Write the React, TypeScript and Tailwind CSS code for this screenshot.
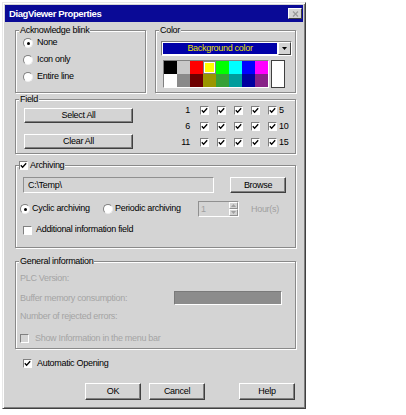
import type { ReactNode } from "react";

const FACE = "bg-[#d4d4d4]";

function Check({ checked = true, disabled = false }: { checked?: boolean; disabled?: boolean }) {
  return (
    <span
      className={`inline-flex w-[9px] h-[9px] shrink-0 items-center justify-center border border-t-[#808080] border-l-[#808080] border-r-white border-b-white ${
        disabled ? "bg-[#d4d4d4]" : "bg-white"
      }`}
    >
      {checked && (
        <svg width="7" height="7" viewBox="0 0 7 7">
          <path d="M0.8 3.2 L2.6 5.2 L6.2 1.2" fill="none" stroke="#000" strokeWidth="1.3" />
        </svg>
      )}
    </span>
  );
}

function Radio({ on = false }: { on?: boolean }) {
  return (
    <span className="inline-flex w-[10px] h-[10px] shrink-0 items-center justify-center rounded-full bg-white border border-t-[#808080] border-l-[#808080] border-r-[#eeeeee] border-b-[#eeeeee]">
      {on && <span className="w-[3px] h-[3px] rounded-full bg-black" />}
    </span>
  );
}

function Btn({ children, className = "" }: { children: ReactNode; className?: string }) {
  return (
    <div
      className={`flex items-center justify-center ${FACE} border border-t-white border-l-white border-r-[#404040] border-b-[#404040] shadow-[inset_-1px_-1px_0_#808080] text-[9px] leading-none text-black ${className}`}
    >
      {children}
    </div>
  );
}

function Group({ legend, className = "", children }: { legend: ReactNode; className?: string; children: ReactNode }) {
  return (
    <fieldset
      className={`border border-[#8a8a8a] shadow-[inset_1px_1px_0_#fff,1px_1px_0_#fff] ${className}`}
    >
      <legend className={`ml-[3px] px-[1px] ${FACE} text-[9px] leading-[12px] text-black`}>{legend}</legend>
      {children}
    </fieldset>
  );
}

const row1 = ["#000000", "#c8c8c8", "#ff0000", "#ffff00", "#00ff00", "#00ffff", "#0000ff", "#ff00ff"];
const row2 = ["#ffffff", "#8a8a8a", "#6e0000", "#9a9600", "#36a036", "#009c9c", "#0000a0", "#882288"];

export default function App() {
  return (
    <div className="w-[406px] h-[415px] bg-white pl-[2px] pt-[2px] font-['Liberation_Sans',Arial,sans-serif] tracking-[-0.3px] text-black">
      <div
        className={`w-[304px] h-[407px] ${FACE} border border-t-[#e8e8e8] border-l-[#e8e8e8] border-r-[#404040] border-b-[#404040] shadow-[inset_1px_1px_0_#fff,inset_-1px_-1px_0_#808080] p-[2px]`}
      >
        {/* title bar */}
        <div className="h-[17px] bg-[#0a0a96] flex items-center justify-between pl-[4px] pr-[1px]">
          <span className="text-white font-bold text-[9.5px] tracking-[-0.4px] leading-none">DiagViewer Properties</span>
          <span
            className={`w-[14px] h-[11px] ${FACE} border border-t-white border-l-white border-r-[#404040] border-b-[#404040] flex items-center justify-center`}
          >
            <svg width="7" height="6" viewBox="0 0 7 6">
              <path d="M1 0.5 L6 5.5 M6 0.5 L1 5.5" stroke="#9a9a9a" strokeWidth="1.2" />
            </svg>
          </span>
        </div>

        <div className="pl-[10px] pr-[7px]">
          {/* top row */}
          <div className="flex mt-[2px]">
            <Group legend="Acknowledge blink" className="w-[131px] h-[69px]">
              <div className="flex flex-col gap-[3px] pl-[7px] text-[9px]">
                <div className="h-[14px] flex items-center gap-[4px]">
                  <Radio on /> None
                </div>
                <div className="h-[14px] flex items-center gap-[4px]">
                  <Radio /> Icon only
                </div>
                <div className="h-[14px] flex items-center gap-[4px]">
                  <Radio /> Entire line
                </div>
              </div>
            </Group>

            <Group legend="Color" className="flex-1 ml-[9px] h-[69px]">
              <div className="pl-[5px] pr-[3px] pt-[5px]">
                <div className="h-[15px] flex bg-white border border-t-[#808080] border-l-[#808080] border-r-white border-b-white">
                  <div className="flex-1 m-[1px] bg-[#0000a8] flex items-center justify-center text-[9px] leading-none text-[#e8e000]">
                    Background color
                  </div>
                  <div
                    className={`w-[13px] ${FACE} border border-t-white border-l-white border-r-[#404040] border-b-[#404040] flex items-center justify-center`}
                  >
                    <svg width="5" height="3" viewBox="0 0 5 3">
                      <path d="M0 0 H5 L2.5 3 Z" fill="#000" />
                    </svg>
                  </div>
                </div>
                <div className="flex mt-[4px] ml-[2px]">
                  <div className="w-[106px] h-[28px] border border-t-[#808080] border-l-[#808080] border-r-white border-b-white">
                    <div className="grid grid-cols-8">
                      {row1.map((c) => (
                        <div
                          key={c}
                          className={`h-[13px] ${c === "#ffff00" ? "shadow-[inset_0_0_0_1px_#808080,inset_0_0_0_2px_#fff]" : ""}`}
                          style={{ backgroundColor: c }}
                        />
                      ))}
                      {row2.map((c) => (
                        <div key={c} className="h-[13px]" style={{ backgroundColor: c }} />
                      ))}
                    </div>
                  </div>
                  <div className="w-[14px] h-[28px] ml-[2px] bg-white border border-[#404040]" />
                </div>
              </div>
            </Group>
          </div>

          {/* field */}
          <Group legend="Field" className="h-[61px]">
            <div className="flex">
              <div className="ml-[8px] w-[109px]">
                <Btn className="h-[15px] mt-[3px]">Select All</Btn>
                <Btn className="h-[15px] mt-[11px]">Clear All</Btn>
              </div>
              <div className="ml-[43px] -mt-[3px] text-[9px]">
                {[1, 6, 11].map((n) => (
                  <div key={n} className="h-[16px] flex items-center">
                    <span className="w-[14px] text-right leading-none">{n}</span>
                    <div className="flex gap-[8px] ml-[10px]">
                      <Check />
                      <Check />
                      <Check />
                      <Check />
                      <Check />
                    </div>
                    <span className="ml-[2px] leading-none">{n + 4}</span>
                  </div>
                ))}
              </div>
            </div>
          </Group>

          {/* archiving */}
          <Group
            legend={
              <span className="flex items-center gap-[2px] -ml-[1px]">
                <Check /> Archiving
              </span>
            }
            className="mt-[5px] h-[89px]"
          >
            <div className="pl-[7px] text-[9px]">
              <div className="flex mt-[6px]">
                <div className="w-[191px] h-[16px] flex items-center pl-[4px] border border-t-[#909090] border-l-[#909090] border-r-white border-b-white leading-none">
                  C:\Temp\
                </div>
                <Btn className="w-[56px] h-[16px] ml-[16px]">Browse</Btn>
              </div>
              <div className="flex items-center h-[16px] mt-[8px] -ml-[3px]">
                <div className="w-[83px] flex items-center gap-[2px]">
                  <Radio on /> Cyclic archiving
                </div>
                <div className="w-[95px] flex items-center gap-[2px]">
                  <Radio /> Periodic archiving
                </div>
                <div className="w-[41px] h-[16px] flex border border-t-[#909090] border-l-[#909090] border-r-white border-b-white">
                  <span className="flex-1 pl-[2px] leading-[14px] text-[#a0a0a0]">1</span>
                  <div className="w-[9px] flex flex-col">
                    <div className="flex-1 flex items-center justify-center border border-t-white border-l-white border-r-[#909090] border-b-[#909090]">
                      <svg width="5" height="3" viewBox="0 0 5 3">
                        <path d="M0 3 H5 L2.5 0 Z" fill="#a0a0a0" />
                      </svg>
                    </div>
                    <div className="flex-1 flex items-center justify-center border border-t-white border-l-white border-r-[#909090] border-b-[#909090]">
                      <svg width="5" height="3" viewBox="0 0 5 3">
                        <path d="M0 0 H5 L2.5 3 Z" fill="#a0a0a0" />
                      </svg>
                    </div>
                  </div>
                </div>
                <span className="ml-[12px] text-[#a0a0a0] leading-none">Hour(s)</span>
              </div>
              <div className="h-[14px] mt-[6px] flex items-center gap-[4px]">
                <Check checked={false} /> Additional information field
              </div>
            </div>
          </Group>

          {/* general information */}
          <Group legend="General information" className="mt-[7px] h-[94px]">
            <div className="pl-[4px] text-[9px] text-[#a4a4a4] leading-none">
              <div className="h-[12px] mt-[5px] flex items-center">PLC Version:</div>
              <div className="h-[16px] mt-[6px] flex items-center">
                <span className="w-[154px]">Buffer memory consumption:</span>
                <div className="w-[108px] h-[14px] bg-[#8c8c8c] border border-t-[#7a7a7a] border-l-[#7a7a7a] border-r-white border-b-white" />
              </div>
              <div className="h-[12px] mt-[4px] flex items-center">Number of rejected errors:</div>
              <div className="h-[14px] mt-[9px] flex items-center gap-[6px]">
                <Check checked={false} disabled /> Show Information in the menu bar
              </div>
            </div>
          </Group>

          <div className="h-[14px] mt-[7px] ml-[8px] flex items-center gap-[5px] text-[9px] leading-none">
            <Check /> Automatic Opening
          </div>

          <div className="flex mt-[13px] ml-[70px]">
            <Btn className="w-[56px] h-[17px]">OK</Btn>
            <Btn className="w-[56px] h-[17px] ml-[8px]">Cancel</Btn>
            <Btn className="w-[56px] h-[17px] ml-[34px]">Help</Btn>
          </div>
        </div>
      </div>
    </div>
  );
}
